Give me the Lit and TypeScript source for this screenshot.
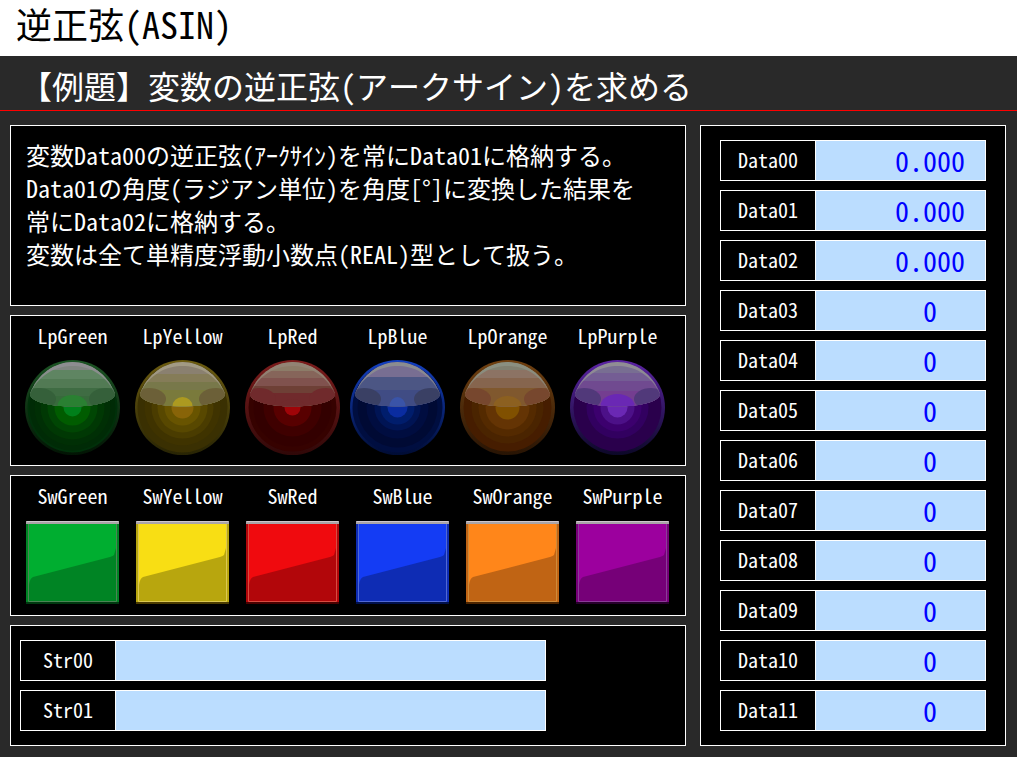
import { LitElement, html, svg, css } from "lit";
import { customElement, property } from "lit/decorators.js";

interface Lamp {
  name: string;
  // Rim colour at the top and at the bottom
  rim: [string, string];
  // Concentric bands, outermost first: radius, colour
  bands: [number, string][];
  // Horizontal bands of the reflection: top edge, colour
  gloss: [number, string][];
  side: string;
  glow: string;
  glowSize: [number, number];
  shine: string;
}

const LAMPS: Lamp[] = [
  {
    name: "LpGreen",
    rim: ["#1c5424", "#021404"],
    bands: [[45, "#00300a"], [43, "#002b06"], [38, "#002f05"], [32, "#003804"], [25, "#004604"], [18, "#005c00"], [9, "#00801a"]],
    gloss: [[0, "#7f8580"], [10, "#5f8562"], [19, "#527a54"], [28, "#3f6c43"], [36, "#386a3c"]],
    side: "#35603a", glow: "#2a8032", glowSize: [15, 11], shine: "#8d8d90",
  },
  {
    name: "LpYellow",
    rim: ["#6c5c10", "#282404"],
    bands: [[45, "#3a3002"], [38, "#3f3300"], [31, "#4a3c00"], [25, "#584800"], [18, "#685400"], [11, "#886408"]],
    gloss: [[0, "#8a8070"], [14, "#857c58"], [22, "#78784a"], [30, "#7a7a3c"]],
    side: "#6c6038", glow: "#ac9a20", glowSize: [10, 9], shine: "#a29a84",
  },
  {
    name: "LpRed",
    rim: ["#7c1c1c", "#300808"],
    bands: [[44, "#360200"], [39, "#330000"], [29, "#3f0000"], [19, "#580000"], [8, "#a00408"]],
    gloss: [[0, "#8c7c68"], [11, "#86655a"], [18, "#80524e"], [26, "#6e4036"], [33, "#702a2c"]],
    side: "#702a2c", glow: "#702a2c", glowSize: [12, 7], shine: "#928374",
  },
  {
    name: "LpBlue",
    rim: ["#1440c0", "#000c34"],
    bands: [[45, "#000e40"], [40, "#000a34"], [31, "#000d40"], [23, "#001454"], [17, "#001d6c"], [10, "#0a2ca0"]],
    gloss: [[0, "#786e92"], [17, "#4c5684"], [30, "#404c84"]],
    side: "#3a4064", glow: "#3a54a8", glowSize: [8, 9], shine: "#8b8c90",
  },
  {
    name: "LpOrange",
    rim: ["#704010", "#281404"],
    bands: [[44, "#461d00"], [36, "#4a2400"], [29, "#542a00"], [22, "#643404"], [12, "#805000"]],
    gloss: [[0, "#808070"], [10, "#8c7364"], [18, "#86654e"], [28, "#80582e"]],
    side: "#77472e", glow: "#8c6020", glowSize: [14, 10], shine: "#8a8f80",
  },
  {
    name: "LpPurple",
    rim: ["#5c24a4", "#0c0828"],
    bands: [[44, "#2a004c"], [31, "#320060"], [24, "#3c006e"], [17, "#4c1088"], [10, "#6a28b4"]],
    gloss: [[0, "#786e92"], [13, "#745d94"], [21, "#704a90"], [31, "#743e90"]],
    side: "#51397a", glow: "#6a28b4", glowSize: [17, 12], shine: "#908d94",
  },
];

const SWITCHES = [
  { name: "SwGreen", light: "#00ae30", dark: "#008424", line: "#4d8355", edge: "#003a10" },
  { name: "SwYellow", light: "#f8de14", dark: "#b8a60e", line: "#dcc850", edge: "#4c3c00" },
  { name: "SwRed", light: "#f00a0e", dark: "#b2060a", line: "#d84c40", edge: "#4a0000" },
  { name: "SwBlue", light: "#143cf4", dark: "#0e2cb4", line: "#5068d4", edge: "#00104c" },
  { name: "SwOrange", light: "#ff861a", dark: "#c06414", line: "#cf8a38", edge: "#4c2400" },
  { name: "SwPurple", light: "#9c009e", dark: "#760078", line: "#8a3c98", edge: "#28002c" },
];

const DATA = Array.from({ length: 12 }, (_, i) => ({
  name: "Data" + String(i).padStart(2, "0"),
  value: i < 3 ? "0.000" : "0",
  real: i < 3,
}));

@customElement("lamp-light")
export class LampLight extends LitElement {
  @property({ attribute: false }) lamp!: Lamp;

  static styles = css`
    :host { display: block; }
    svg { display: block; width: 95px; height: 95px; }
  `;

  render() {
    const l = this.lamp;
    return html`<svg viewBox="0 0 95 95" aria-hidden="true">
      <defs>
        <linearGradient id="rim" x1="0" y1="0" x2="0" y2="1">
          <stop offset="0" stop-color=${l.rim[0]}></stop>
          <stop offset="1" stop-color=${l.rim[1]}></stop>
        </linearGradient>
        <linearGradient id="shine" x1="0" y1="0" x2="0" y2="1">
          <stop offset="0.2" stop-color=${l.shine}></stop>
          <stop offset="1" stop-color=${l.shine} stop-opacity="0.5"></stop>
        </linearGradient>
        <clipPath id="gloss">
          <path d="M5 34C12 14 30 2 47.500 2S83 14 90 34C90 42 68 46.500 47.500 46.500S5 42 5 34Z"></path>
        </clipPath>
      </defs>
      <circle cx="47.5" cy="47.5" r="47.5" fill="url(#rim)"></circle>
      ${l.bands.map(([r, c]) => svg`<circle cx="47.5" cy="47.5" r=${r} fill=${c}></circle>`)}
      <g clip-path="url(#gloss)">
        ${l.gloss.map(([y, c]) => svg`<rect x="0" y=${y} width="95" height="50" fill=${c}></rect>`)}
        <ellipse cx="14" cy="39" rx="17" ry="11" fill=${l.side}></ellipse>
        <ellipse cx="81" cy="39" rx="17" ry="11" fill=${l.side}></ellipse>
        <ellipse cx="47.5" cy="46" rx=${l.glowSize[0]} ry=${l.glowSize[1]} fill=${l.glow}></ellipse>
        <path d="M5 34C12 14 30 2 47.500 2S83 14 90 34C80 13 63 6 47.500 6S15 13 5 34Z" fill="url(#shine)"></path>
      </g>
    </svg>`;
  }
}

@customElement("app-root")
export class AppRoot extends LitElement {
  static styles = css`
    :host {
      display: flex;
      flex-direction: column;
      min-height: 100vh;
      box-sizing: border-box;
      background: #292929;
      color: #fff;
      font-family: "Noto Sans Mono CJK JP", "Noto Sans CJK JP", monospace;
      font-size: 20px;
    }
    * { box-sizing: border-box; }
    .title {
      margin: 0;
      padding: 0 16px 10px;
      background: #fff;
      color: #000;
      font-size: 36px;
      font-weight: 400;
      line-height: 46px;
    }
    .subject {
      margin: 0;
      padding: 6px 20px 2px;
      border-bottom: 1px solid #f00;
      font-size: 32px;
      font-weight: 400;
      line-height: 46px;
    }
    .main {
      flex: 1;
      display: grid;
      grid-template-columns: minmax(0, 1fr) 306px;
      gap: 14px;
      padding: 14px 11px 11px 10px;
    }
    .left {
      display: grid;
      grid-template-rows: 1fr auto auto auto;
      gap: 9px;
    }
    .panel { border: 1px solid #fff; background: #000; }
    .text {
      margin: 0;
      padding: 12px 15px;
      font-size: 24px;
      line-height: 33px;
    }
    .lamps { display: flex; gap: 10px; padding: 5px 14px 10px; }
    .group, .switches { display: flex; gap: 15px; }
    .switches { padding: 5px 14px 11px; }
    .item {
      width: 95px;
      display: flex;
      flex-direction: column;
      align-items: center;
      gap: 9px;
      line-height: 30px;
      white-space: nowrap;
    }
    .switches .item { gap: 10px; }
    .switch {
      width: 93px;
      height: 83px;
      padding: 0;
      border: 0;
      background: none;
      cursor: pointer;
    }
    .switch svg { display: block; }
    .fields {
      display: flex;
      flex-direction: column;
      gap: 9px;
      padding: 14px 19px;
    }
    .strings { padding: 14px 139px 14px 9px; }
    .field {
      display: grid;
      grid-template-columns: 95px minmax(0, 1fr);
      height: 41px;
      border: 1px solid #fff;
    }
    .field label {
      border-right: 1px solid #fff;
      line-height: 38px;
      text-align: center;
    }
    .field input {
      width: 100%;
      min-width: 0;
      padding: 0 48px 1px 4px;
      border: 0;
      border-radius: 0;
      outline: 0;
      background: #bbddff;
      color: #00f;
      font-family: inherit;
      font-size: 28px;
      line-height: 36px;
      text-align: right;
    }
    .field .real { padding-right: 20px; }
    .field .string { padding: 0 4px 1px; text-align: left; }
  `;

  render() {
    const lamp = (l: Lamp) => html`<div class="item"><span>${l.name}</span><lamp-light .lamp=${l}></lamp-light></div>`;
    return html`
      <h1 class="title">逆正弦(ASIN)</h1>
      <h2 class="subject">【例題】変数の逆正弦(アークサイン)を求める</h2>
      <main class="main">
        <div class="left">
          <p class="panel text">変数Data00の逆正弦(ｱｰｸｻｲﾝ)を常にData01に格納する。<br />Data01の角度(ラジアン単位)を角度[°]に変換した結果を<br />常にData02に格納する。<br />変数は全て単精度浮動小数点(REAL)型として扱う。</p>
          <section class="panel lamps">
            <div class="group">${LAMPS.slice(0, 3).map(lamp)}</div>
            <div class="group">${LAMPS.slice(3).map(lamp)}</div>
          </section>
          <section class="panel switches">
            ${SWITCHES.map((s) => html`<div class="item">
              <label for=${s.name}>${s.name}</label>
              <button class="switch" id=${s.name} type="button">
                <svg width="93" height="83" viewBox="0 0 93 83" aria-hidden="true">
                  <rect width="93" height="83" fill=${s.dark}></rect>
                  <path d="M3 3H90V27L88 34Q87 35 84 36L7 56Q4 57 3 64Z" fill=${s.light}></path>
                  <path d="M2.500 2V80.500H90.500V2" fill="none" stroke=${s.line}></path>
                  <rect y="81" width="93" height="2" fill=${s.edge}></rect>
                  <rect width="93" height="3" fill="#aaa4a8"></rect>
                  <rect x="1" width="91" height="1" fill="#ccc6cc"></rect>
                </svg>
              </button>
            </div>`)}
          </section>
          <section class="panel fields strings">
            ${["Str00", "Str01"].map((n) => html`<div class="field">
              <label for=${n}>${n}</label><input class="string" id=${n} type="text" />
            </div>`)}
          </section>
        </div>
        <section class="panel fields">
          ${DATA.map((d) => html`<div class="field">
            <label for=${d.name}>${d.name}</label>
            <input class=${d.real ? "real" : "int"} id=${d.name} type="text" inputmode="decimal" .value=${d.value} />
          </div>`)}
        </section>
      </main>
    `;
  }
}
